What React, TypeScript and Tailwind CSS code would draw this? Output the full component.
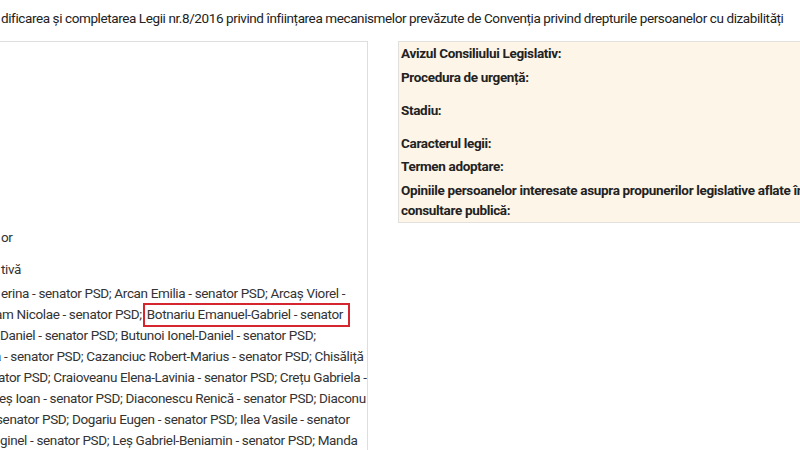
const senators = [
  { text: "erina - senator PSD; Arcan Emilia - senator PSD; Arcaș Viorel -", shift: "ml-[1px]" },
  { text: "am Nicolae - senator PSD; ", mark: "Botnariu Emanuel-Gabriel - senator", shift: "-ml-[5px]" },
  { text: "Daniel - senator PSD; Butunoi Ionel-Daniel - senator PSD;", shift: "ml-0" },
  { text: "a - senator PSD; Cazanciuc Robert-Marius - senator PSD; Chisăliță", shift: "-ml-[6px]" },
  { text: "ator PSD; Craioveanu Elena-Lavinia - senator PSD; Crețu Gabriela -", shift: "-ml-[2px]" },
  { text: "eș Ioan - senator PSD; Diaconescu Renică - senator PSD; Diaconu", shift: "-ml-[1px]" },
  { text: "senator PSD; Dogariu Eugen - senator PSD; Ilea Vasile - senator", shift: "-ml-[4px]" },
  { text: "ginel - senator PSD; Leș Gabriel-Beniamin - senator PSD; Manda", shift: "ml-0" },
];

const fields = [
  { label: "Avizul Consiliului Legislativ:", cls: "mt-0" },
  { label: "Procedura de urgență:", cls: "mt-px" },
  { label: "Stadiu:", cls: "mt-[10px]" },
  { label: "Caracterul legii:", cls: "mt-[10px]" },
  { label: "Termen adoptare:", cls: "mt-0" },
];

export default function App() {
  return (
    <div className="w-[800px] h-[450px] overflow-hidden bg-white text-[#333] text-[13.5px] tracking-[-0.4px] font-['Roboto','Liberation_Sans',sans-serif]">
      {/* Titlu */}
      <div className="h-[41px] pt-[7px] pl-px whitespace-nowrap leading-[22px] text-[#222]">
        dificarea și completarea Legii nr.8/2016 privind înființarea mecanismelor prevăzute de Convenția privind drepturile persoanelor cu dizabilități
      </div>

      <div className="flex items-start">
        {/* Panou stânga */}
        <div className="w-[368px] h-[420px] shrink-0 overflow-hidden border-t border-r border-[#dedede] pt-[185px] leading-[21px] tracking-[-0.35px]">
          <div className="pl-px whitespace-nowrap">or</div>
          <div className="mt-[11px] pl-px whitespace-nowrap">tivă</div>
          <div className="mt-[3px]">
            {senators.map((s) => (
              <div key={s.text} className={`whitespace-nowrap ${s.shift}`}>
                {s.text}
                {s.mark && (
                  <span className="pt-px pb-[3px] pl-[2px] pr-[5px] outline-2 outline-[#d5262f]">{s.mark}</span>
                )}
              </div>
            ))}
          </div>
        </div>

        {/* Panou dreapta */}
        <div className="ml-[30px] w-[420px] shrink-0 bg-[#fdf5e8] border border-[#e2e0dc] pl-[2px] pb-[2px] tracking-[-0.33px] font-bold text-[#222] whitespace-nowrap">
          {fields.map((f) => (
            <div key={f.label} className={`leading-[23px] ${f.cls}`}>
              {f.label}
            </div>
          ))}
          <div className="mt-[2px] leading-[20px]">
            Opiniile persoanelor interesate asupra propunerilor legislative aflate în
            <br />
            consultare publică:
          </div>
        </div>
      </div>
    </div>
  );
}
